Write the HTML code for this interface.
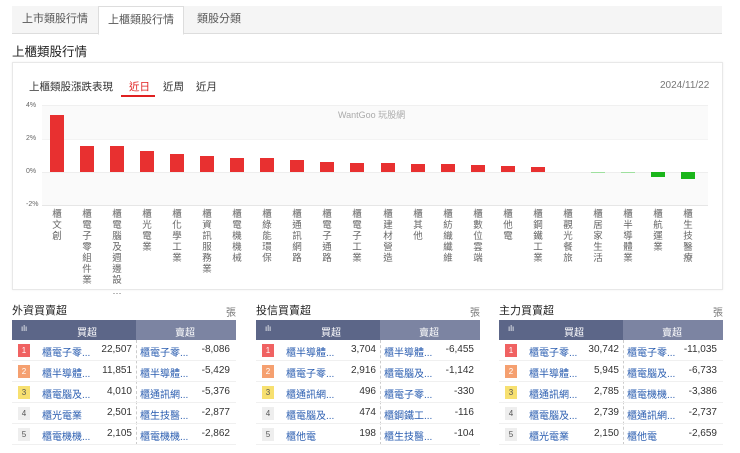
<!DOCTYPE html>
<html><head><meta charset="utf-8"><style>
*{margin:0;padding:0;box-sizing:border-box}
body{width:740px;height:453px;overflow:hidden;background:#fff;font-family:"Liberation Sans","Noto Sans CJK TC",sans-serif;color:#333;position:relative}
.a{position:absolute}
.tabs{left:12px;top:6px;width:710px;height:28px;background:#f5f5f5;border-bottom:1px solid #ddd}
.tab{position:absolute;top:0;height:28px;line-height:27px;font-size:11px;color:#555;text-align:center}
.card{left:12px;top:62px;width:711px;height:228px;border:1px solid #e8e8e8;box-shadow:0 0 2px #eee}
.lbl{position:absolute;top:209px;width:12px;font-size:9.5px;line-height:11px;color:#666;text-align:center;word-wrap:break-word}
.yl{position:absolute;left:26px;font-size:7px;color:#666}
.bar{position:absolute;width:14px}
.tbl{position:absolute;top:320px;width:224px}
.th{height:20px;color:#fff;font-size:10px;position:relative}
.row{height:21px;position:relative;border-bottom:1px solid #f0f0f0;font-size:10px}
.rk{position:absolute;left:6px;top:4px;width:12px;height:13px;font-size:8px;line-height:13px;text-align:center;color:#fff}
.n1{position:absolute;left:30px;top:4px;color:#2a5db0}
.v1{position:absolute;right:104px;top:4px;color:#333}
.n2{position:absolute;left:128px;top:4px;color:#2a5db0}
.v2{position:absolute;right:6px;top:4px;color:#333}
.ttl{position:absolute;top:302px;font-size:11px;color:#222}
.unit{position:absolute;top:304px;font-size:10px;color:#777}
</style></head><body>
<div class="a tabs">
<div class="tab" style="left:0;width:86px">上市類股行情</div>
<div class="tab" style="left:86px;width:86px;background:#fff;border:1px solid #ddd;border-bottom:1px solid #fff;height:29px">上櫃類股行情</div>
<div class="tab" style="left:172px;width:70px">類股分類</div>
</div>
<div class="a" style="left:12px;top:41px;font-size:12.5px;color:#222">上櫃類股行情</div>
<div class="a card"></div>
<div class="a" style="left:29px;top:79px;font-size:10.5px;color:#333">上櫃類股漲跌表現</div>
<div class="a" style="left:129px;top:79px;font-size:10.5px;color:#e02020">近日</div>
<div class="a" style="left:121px;top:95px;width:34px;height:2px;background:#e02020"></div>
<div class="a" style="left:163px;top:79px;font-size:10.5px;color:#333">近周</div>
<div class="a" style="left:196px;top:79px;font-size:10.5px;color:#333">近月</div>
<div class="a" style="left:660px;top:80px;font-size:10px;color:#777">2024/11/22</div>
<div class="a" style="left:42px;top:105px;width:666px;height:34px;background:#fafafa;border-top:1px solid #f0f0f0"></div>
<div class="a" style="left:42px;top:139px;width:666px;height:33px;border-top:1px solid #f3f3f3"></div>
<div class="a" style="left:42px;top:172px;width:666px;height:33px;background:#fafafa;border-top:1px solid #eee"></div>
<div class="a" style="left:42px;top:205px;width:666px;border-top:1px solid #e6e6e6"></div>
<div class="a" style="left:338px;top:108px;font-size:9px;color:#aaa">WantGoo 玩股網</div>
<div class="yl" style="top:102px">4%</div><div class="yl" style="top:135px">2%</div><div class="yl" style="top:168px">0%</div><div class="yl" style="top:201px">-2%</div>
<div class="bar" style="left:50px;top:115px;height:57px;background:#e83030"></div>
<div class="bar" style="left:80px;top:146px;height:26px;background:#e83030"></div>
<div class="bar" style="left:110px;top:146px;height:26px;background:#e83030"></div>
<div class="bar" style="left:140px;top:151px;height:21px;background:#e83030"></div>
<div class="bar" style="left:170px;top:154px;height:18px;background:#e83030"></div>
<div class="bar" style="left:200px;top:156px;height:16px;background:#e83030"></div>
<div class="bar" style="left:230px;top:158px;height:14px;background:#e83030"></div>
<div class="bar" style="left:260px;top:158px;height:14px;background:#e83030"></div>
<div class="bar" style="left:290px;top:160px;height:12px;background:#e83030"></div>
<div class="bar" style="left:320px;top:162px;height:10px;background:#e83030"></div>
<div class="bar" style="left:350px;top:163px;height:9px;background:#e83030"></div>
<div class="bar" style="left:381px;top:163px;height:9px;background:#e83030"></div>
<div class="bar" style="left:411px;top:164px;height:8px;background:#e83030"></div>
<div class="bar" style="left:441px;top:164px;height:8px;background:#e83030"></div>
<div class="bar" style="left:471px;top:165px;height:7px;background:#e83030"></div>
<div class="bar" style="left:501px;top:166px;height:6px;background:#e83030"></div>
<div class="bar" style="left:531px;top:167px;height:5px;background:#e83030"></div>
<div class="bar" style="left:591px;top:172px;height:1px;background:#9ee09e"></div>
<div class="bar" style="left:621px;top:172px;height:1px;background:#9ee09e"></div>
<div class="bar" style="left:651px;top:172px;height:5px;background:#1ab51a"></div>
<div class="bar" style="left:681px;top:172px;height:7px;background:#1ab51a"></div>
<div class="lbl" style="left:51px">櫃文創</div>
<div class="lbl" style="left:81px">櫃電子零組件業</div>
<div class="lbl" style="left:111px">櫃電腦及週邊設…</div>
<div class="lbl" style="left:141px">櫃光電業</div>
<div class="lbl" style="left:171px">櫃化學工業</div>
<div class="lbl" style="left:201px">櫃資訊服務業</div>
<div class="lbl" style="left:231px">櫃電機機械</div>
<div class="lbl" style="left:261px">櫃綠能環保</div>
<div class="lbl" style="left:291px">櫃通訊網路</div>
<div class="lbl" style="left:321px">櫃電子通路</div>
<div class="lbl" style="left:351px">櫃電子工業</div>
<div class="lbl" style="left:382px">櫃建材營造</div>
<div class="lbl" style="left:412px">櫃其他</div>
<div class="lbl" style="left:442px">櫃紡織纖維</div>
<div class="lbl" style="left:472px">櫃數位雲端</div>
<div class="lbl" style="left:502px">櫃他電</div>
<div class="lbl" style="left:532px">櫃鋼鐵工業</div>
<div class="lbl" style="left:562px">櫃觀光餐旅</div>
<div class="lbl" style="left:592px">櫃居家生活</div>
<div class="lbl" style="left:622px">櫃半導體業</div>
<div class="lbl" style="left:652px">櫃航運業</div>
<div class="lbl" style="left:682px">櫃生技醫療</div>

<div class="ttl" style="left:12px">外資買賣超</div><div class="unit" style="left:226px">張</div>
<div class="ttl" style="left:256px">投信買賣超</div><div class="unit" style="left:470px">張</div>
<div class="ttl" style="left:499px">主力買賣超</div><div class="unit" style="left:713px">張</div>

<div class="tbl" style="left:12px">
<div class="th"><div class="a" style="left:0;top:0;width:124px;height:20px;background:#5c6688"></div><div class="a" style="left:124px;top:0;width:100px;height:20px;background:#7c84a2"></div><div class="a" style="left:9px;top:4px;font-size:8px">ılı</div><div class="a" style="left:65px;top:4px">買超</div><div class="a" style="left:163px;top:4px">賣超</div></div>
<div class="a" style="left:124px;top:20px;height:105px;border-left:1px dashed #ccc"></div>
<div class="row"><div class="rk" style="background:#f06262">1</div><div class="n1">櫃電子零...</div><div class="v1">22,507</div><div class="n2">櫃電子零...</div><div class="v2">-8,086</div></div>
<div class="row"><div class="rk" style="background:#f5a070">2</div><div class="n1">櫃半導體...</div><div class="v1">11,851</div><div class="n2">櫃半導體...</div><div class="v2">-5,429</div></div>
<div class="row"><div class="rk" style="background:#f7e070;color:#555">3</div><div class="n1">櫃電腦及...</div><div class="v1">4,010</div><div class="n2">櫃通訊網...</div><div class="v2">-5,376</div></div>
<div class="row"><div class="rk" style="background:#eee;color:#555">4</div><div class="n1">櫃光電業</div><div class="v1">2,501</div><div class="n2">櫃生技醫...</div><div class="v2">-2,877</div></div>
<div class="row"><div class="rk" style="background:#eee;color:#555">5</div><div class="n1">櫃電機機...</div><div class="v1">2,105</div><div class="n2">櫃電機機...</div><div class="v2">-2,862</div></div>
</div>

<div class="tbl" style="left:256px">
<div class="th"><div class="a" style="left:0;top:0;width:124px;height:20px;background:#5c6688"></div><div class="a" style="left:124px;top:0;width:100px;height:20px;background:#7c84a2"></div><div class="a" style="left:9px;top:4px;font-size:8px">ılı</div><div class="a" style="left:65px;top:4px">買超</div><div class="a" style="left:163px;top:4px">賣超</div></div>
<div class="a" style="left:124px;top:20px;height:105px;border-left:1px dashed #ccc"></div>
<div class="row"><div class="rk" style="background:#f06262">1</div><div class="n1">櫃半導體...</div><div class="v1">3,704</div><div class="n2">櫃半導體...</div><div class="v2">-6,455</div></div>
<div class="row"><div class="rk" style="background:#f5a070">2</div><div class="n1">櫃電子零...</div><div class="v1">2,916</div><div class="n2">櫃電腦及...</div><div class="v2">-1,142</div></div>
<div class="row"><div class="rk" style="background:#f7e070;color:#555">3</div><div class="n1">櫃通訊網...</div><div class="v1">496</div><div class="n2">櫃電子零...</div><div class="v2">-330</div></div>
<div class="row"><div class="rk" style="background:#eee;color:#555">4</div><div class="n1">櫃電腦及...</div><div class="v1">474</div><div class="n2">櫃鋼鐵工...</div><div class="v2">-116</div></div>
<div class="row"><div class="rk" style="background:#eee;color:#555">5</div><div class="n1">櫃他電</div><div class="v1">198</div><div class="n2">櫃生技醫...</div><div class="v2">-104</div></div>
</div>

<div class="tbl" style="left:499px">
<div class="th"><div class="a" style="left:0;top:0;width:124px;height:20px;background:#5c6688"></div><div class="a" style="left:124px;top:0;width:100px;height:20px;background:#7c84a2"></div><div class="a" style="left:9px;top:4px;font-size:8px">ılı</div><div class="a" style="left:65px;top:4px">買超</div><div class="a" style="left:163px;top:4px">賣超</div></div>
<div class="a" style="left:124px;top:20px;height:105px;border-left:1px dashed #ccc"></div>
<div class="row"><div class="rk" style="background:#f06262">1</div><div class="n1">櫃電子零...</div><div class="v1">30,742</div><div class="n2">櫃電子零...</div><div class="v2">-11,035</div></div>
<div class="row"><div class="rk" style="background:#f5a070">2</div><div class="n1">櫃半導體...</div><div class="v1">5,945</div><div class="n2">櫃電腦及...</div><div class="v2">-6,733</div></div>
<div class="row"><div class="rk" style="background:#f7e070;color:#555">3</div><div class="n1">櫃通訊網...</div><div class="v1">2,785</div><div class="n2">櫃電機機...</div><div class="v2">-3,386</div></div>
<div class="row"><div class="rk" style="background:#eee;color:#555">4</div><div class="n1">櫃電腦及...</div><div class="v1">2,739</div><div class="n2">櫃通訊網...</div><div class="v2">-2,737</div></div>
<div class="row"><div class="rk" style="background:#eee;color:#555">5</div><div class="n1">櫃光電業</div><div class="v1">2,150</div><div class="n2">櫃他電</div><div class="v2">-2,659</div></div>
</div>
</body></html>
